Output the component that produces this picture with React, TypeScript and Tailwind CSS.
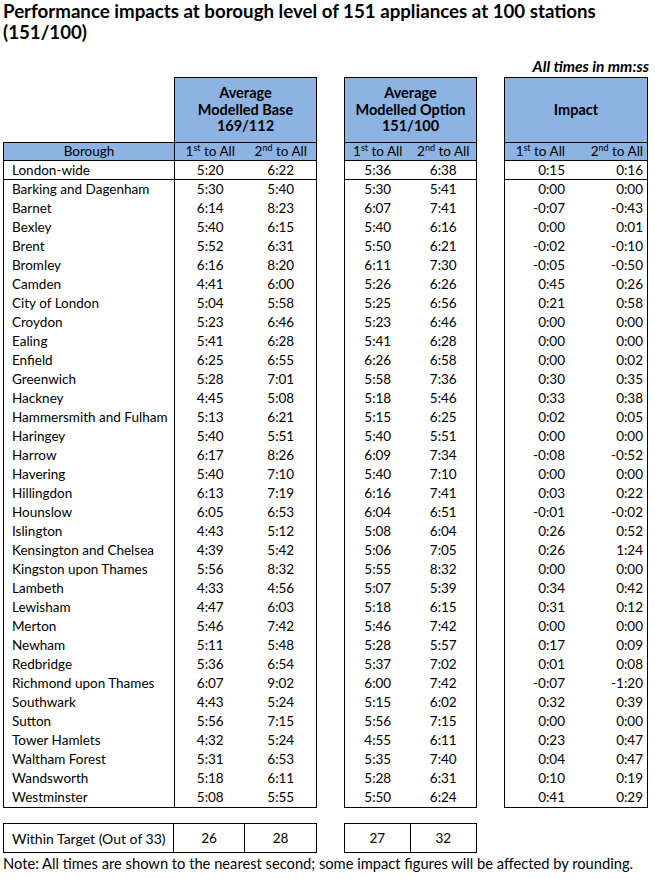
import React from 'react'

type Row = [string, string, string, string, string, string, string]

const londonWide: Row = ['London-wide', '5:20', '6:22', '5:36', '6:38', '0:15', '0:16']

const rows: Row[] = [
  ['Barking and Dagenham', '5:30', '5:40', '5:30', '5:41', '0:00', '0:00'],
  ['Barnet', '6:14', '8:23', '6:07', '7:41', '-0:07', '-0:43'],
  ['Bexley', '5:40', '6:15', '5:40', '6:16', '0:00', '0:01'],
  ['Brent', '5:52', '6:31', '5:50', '6:21', '-0:02', '-0:10'],
  ['Bromley', '6:16', '8:20', '6:11', '7:30', '-0:05', '-0:50'],
  ['Camden', '4:41', '6:00', '5:26', '6:26', '0:45', '0:26'],
  ['City of London', '5:04', '5:58', '5:25', '6:56', '0:21', '0:58'],
  ['Croydon', '5:23', '6:46', '5:23', '6:46', '0:00', '0:00'],
  ['Ealing', '5:41', '6:28', '5:41', '6:28', '0:00', '0:00'],
  ['Enfield', '6:25', '6:55', '6:26', '6:58', '0:00', '0:02'],
  ['Greenwich', '5:28', '7:01', '5:58', '7:36', '0:30', '0:35'],
  ['Hackney', '4:45', '5:08', '5:18', '5:46', '0:33', '0:38'],
  ['Hammersmith and Fulham', '5:13', '6:21', '5:15', '6:25', '0:02', '0:05'],
  ['Haringey', '5:40', '5:51', '5:40', '5:51', '0:00', '0:00'],
  ['Harrow', '6:17', '8:26', '6:09', '7:34', '-0:08', '-0:52'],
  ['Havering', '5:40', '7:10', '5:40', '7:10', '0:00', '0:00'],
  ['Hillingdon', '6:13', '7:19', '6:16', '7:41', '0:03', '0:22'],
  ['Hounslow', '6:05', '6:53', '6:04', '6:51', '-0:01', '-0:02'],
  ['Islington', '4:43', '5:12', '5:08', '6:04', '0:26', '0:52'],
  ['Kensington and Chelsea', '4:39', '5:42', '5:06', '7:05', '0:26', '1:24'],
  ['Kingston upon Thames', '5:56', '8:32', '5:55', '8:32', '0:00', '0:00'],
  ['Lambeth', '4:33', '4:56', '5:07', '5:39', '0:34', '0:42'],
  ['Lewisham', '4:47', '6:03', '5:18', '6:15', '0:31', '0:12'],
  ['Merton', '5:46', '7:42', '5:46', '7:42', '0:00', '0:00'],
  ['Newham', '5:11', '5:48', '5:28', '5:57', '0:17', '0:09'],
  ['Redbridge', '5:36', '6:54', '5:37', '7:02', '0:01', '0:08'],
  ['Richmond upon Thames', '6:07', '9:02', '6:00', '7:42', '-0:07', '-1:20'],
  ['Southwark', '4:43', '5:24', '5:15', '6:02', '0:32', '0:39'],
  ['Sutton', '5:56', '7:15', '5:56', '7:15', '0:00', '0:00'],
  ['Tower Hamlets', '4:32', '5:24', '4:55', '6:11', '0:23', '0:47'],
  ['Waltham Forest', '5:31', '6:53', '5:35', '7:40', '0:04', '0:47'],
  ['Wandsworth', '5:18', '6:11', '5:28', '6:31', '0:10', '0:19'],
  ['Westminster', '5:08', '5:55', '5:50', '6:24', '0:41', '0:29'],
]

function SubHead({ n, sup }: { n: string; sup: string }) {
  return (
    <span>
      {n}
      <span className="relative -top-[5px] text-[9px]">{sup}</span> to All
    </span>
  )
}

// one bordered column group: header title, sub header row, London-wide, boroughs
function Block({
  title,
  a,
  b,
  width,
  align,
}: {
  title: React.ReactNode
  a: number
  b: number
  width: string
  align: 'center' | 'right'
}) {
  const cellA = align === 'center' ? 'w-1/2 text-center' : 'w-1/2 pr-[11px] text-right'
  const cellB = align === 'center' ? 'w-1/2 text-center' : 'w-1/2 pr-[4px] text-right'
  return (
    <div className={`${width} border border-black`}>
      <div className="flex h-[65px] items-center justify-center border-b border-black bg-[#8db3e2] text-center text-[14.5px] font-bold leading-[16.5px]">
        {title}
      </div>
      <div className="flex h-[18px] items-center border-b border-black bg-[#8db3e2] leading-none">
        <div className={cellA}>
          <SubHead n="1" sup="st" />
        </div>
        <div className={cellB}>
          <SubHead n="2" sup="nd" />
        </div>
      </div>
      <div className="flex h-[19px] items-center border-b border-black">
        <div className={cellA}>{londonWide[a]}</div>
        <div className={cellB}>{londonWide[b]}</div>
      </div>
      {rows.map((r) => (
        <div key={r[0]} className="flex h-[19px] items-center">
          <div className={cellA}>{r[a]}</div>
          <div className={cellB}>{r[b]}</div>
        </div>
      ))}
    </div>
  )
}

export default function App() {
  return (
    <div className="min-h-[879px] w-[655px] bg-white pl-[3px] font-['Lato',sans-serif] text-[13.5px] text-black">
      <h1 className="pt-[1px] text-[18.7px] font-bold leading-[21px]">
        Performance impacts at borough level of 151 appliances at 100 stations
        <br />
        (151/100)
      </h1>

      <p className="mt-[15px] pr-[6px] text-right text-[15.5px] font-bold italic leading-[17px]">
        All times in mm:ss
      </p>

      <div className="mt-[2px] flex items-end">
        {/* Borough column */}
        <div className="w-[171px] border-y border-l border-black">
          <div className="flex h-[18px] items-center justify-center border-b border-black bg-[#8db3e2] leading-none">
            Borough
          </div>
          <div className="flex h-[19px] items-center border-b border-black pl-[8px]">
            {londonWide[0]}
          </div>
          {rows.map((r) => (
            <div key={r[0]} className="flex h-[19px] items-center pl-[8px]">
              {r[0]}
            </div>
          ))}
        </div>

        <Block
          width="w-[143px]"
          a={1}
          b={2}
          align="center"
          title={
            <span>
              Average
              <br />
              Modelled Base
              <br />
              169/112
            </span>
          }
        />
        <div className="ml-[27px]">
          <Block
            width="w-[133px]"
            a={3}
            b={4}
            align="center"
            title={
              <span>
                Average
                <br />
                Modelled Option
                <br />
                151/100
              </span>
            }
          />
        </div>
        <div className="ml-[27px]">
          <Block width="w-[144px]" a={5} b={6} align="right" title={<span>Impact</span>} />
        </div>
      </div>

      {/* summary */}
      <div className="mt-[15px] flex">
        <div className="flex h-[30px] w-[314px] border border-black">
          <div className="flex w-[170px] items-center border-r border-black pl-[8px] text-[14px]">
            Within Target (Out of 33)
          </div>
          <div className="flex w-[71px] items-center justify-center border-r border-black">26</div>
          <div className="flex flex-1 items-center justify-center">28</div>
        </div>
        <div className="ml-[27px] flex h-[30px] w-[133px] border border-black">
          <div className="flex w-1/2 items-center justify-center border-r border-black">27</div>
          <div className="flex w-1/2 items-center justify-center">32</div>
        </div>
      </div>

      <p className="mt-[2px] text-[14.7px] leading-[17px]">
        Note: All times are shown to the nearest second; some impact figures will be affected by
        rounding.
      </p>
    </div>
  )
}
